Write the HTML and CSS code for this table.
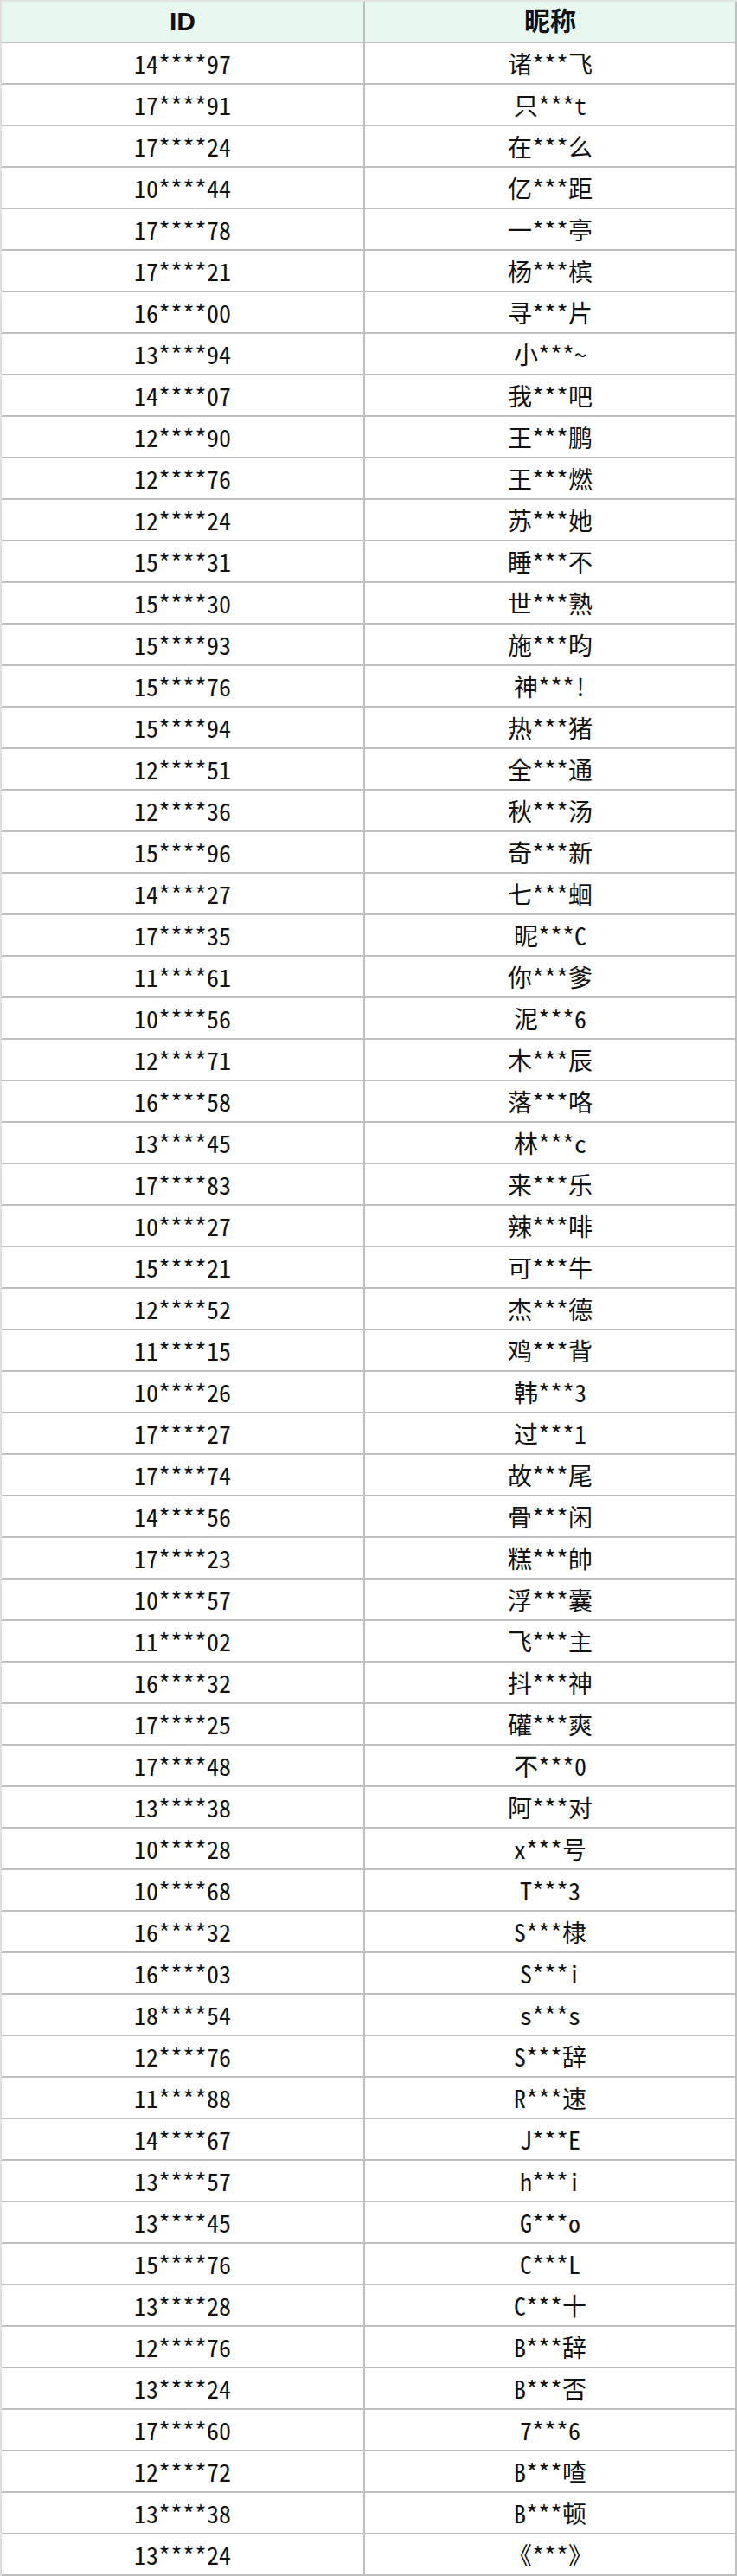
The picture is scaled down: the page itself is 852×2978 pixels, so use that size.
FILE: index.html
```html
<!DOCTYPE html>
<html lang="zh-CN">
<head>
<meta charset="utf-8">
<title>名单</title>
<link rel="stylesheet" href="styles.css">
</head>
<body>
<div class="sheet">
  <div class="cell head">ID</div><div class="cell head">昵称</div>
  <div class="cell">14****97</div><div class="cell">诸***飞</div>
  <div class="cell">17****91</div><div class="cell">只***t</div>
  <div class="cell">17****24</div><div class="cell">在***么</div>
  <div class="cell">10****44</div><div class="cell">亿***距</div>
  <div class="cell">17****78</div><div class="cell">一***亭</div>
  <div class="cell">17****21</div><div class="cell">杨***槟</div>
  <div class="cell">16****00</div><div class="cell">寻***片</div>
  <div class="cell">13****94</div><div class="cell">小***~</div>
  <div class="cell">14****07</div><div class="cell">我***吧</div>
  <div class="cell">12****90</div><div class="cell">王***鹏</div>
  <div class="cell">12****76</div><div class="cell">王***燃</div>
  <div class="cell">12****24</div><div class="cell">苏***她</div>
  <div class="cell">15****31</div><div class="cell">睡***不</div>
  <div class="cell">15****30</div><div class="cell">世***熟</div>
  <div class="cell">15****93</div><div class="cell">施***昀</div>
  <div class="cell">15****76</div><div class="cell">神***!</div>
  <div class="cell">15****94</div><div class="cell">热***猪</div>
  <div class="cell">12****51</div><div class="cell">全***通</div>
  <div class="cell">12****36</div><div class="cell">秋***汤</div>
  <div class="cell">15****96</div><div class="cell">奇***新</div>
  <div class="cell">14****27</div><div class="cell">七***蛔</div>
  <div class="cell">17****35</div><div class="cell">昵***C</div>
  <div class="cell">11****61</div><div class="cell">你***爹</div>
  <div class="cell">10****56</div><div class="cell">泥***6</div>
  <div class="cell">12****71</div><div class="cell">木***辰</div>
  <div class="cell">16****58</div><div class="cell">落***咯</div>
  <div class="cell">13****45</div><div class="cell">林***c</div>
  <div class="cell">17****83</div><div class="cell">来***乐</div>
  <div class="cell">10****27</div><div class="cell">辣***啡</div>
  <div class="cell">15****21</div><div class="cell">可***牛</div>
  <div class="cell">12****52</div><div class="cell">杰***德</div>
  <div class="cell">11****15</div><div class="cell">鸡***背</div>
  <div class="cell">10****26</div><div class="cell">韩***3</div>
  <div class="cell">17****27</div><div class="cell">过***1</div>
  <div class="cell">17****74</div><div class="cell">故***尾</div>
  <div class="cell">14****56</div><div class="cell">骨***闲</div>
  <div class="cell">17****23</div><div class="cell">糕***帥</div>
  <div class="cell">10****57</div><div class="cell">浮***囊</div>
  <div class="cell">11****02</div><div class="cell">飞***主</div>
  <div class="cell">16****32</div><div class="cell">抖***神</div>
  <div class="cell">17****25</div><div class="cell">礶***爽</div>
  <div class="cell">17****48</div><div class="cell">不***0</div>
  <div class="cell">13****38</div><div class="cell">阿***对</div>
  <div class="cell">10****28</div><div class="cell">x***号</div>
  <div class="cell">10****68</div><div class="cell">T***3</div>
  <div class="cell">16****32</div><div class="cell">S***棣</div>
  <div class="cell">16****03</div><div class="cell">S***i</div>
  <div class="cell">18****54</div><div class="cell">s***s</div>
  <div class="cell">12****76</div><div class="cell">S***辞</div>
  <div class="cell">11****88</div><div class="cell">R***速</div>
  <div class="cell">14****67</div><div class="cell">J***E</div>
  <div class="cell">13****57</div><div class="cell">h***i</div>
  <div class="cell">13****45</div><div class="cell">G***o</div>
  <div class="cell">15****76</div><div class="cell">C***L</div>
  <div class="cell">13****28</div><div class="cell">C***十</div>
  <div class="cell">12****76</div><div class="cell">B***辞</div>
  <div class="cell">13****24</div><div class="cell">B***否</div>
  <div class="cell">17****60</div><div class="cell">7***6</div>
  <div class="cell">12****72</div><div class="cell">B***喳</div>
  <div class="cell">13****38</div><div class="cell">B***顿</div>
  <div class="cell">13****24</div><div class="cell">《***》</div>
</div>
</body>
</html>
```

FILE: styles.css
```css
html, body {
  margin: 0;
  padding: 0;
  background: #ffffff;
}

.sheet {
  width: 852px;
  box-sizing: border-box;
  display: grid;
  grid-template-columns: 420px 430px;
  grid-auto-rows: 48px;
  border-top: 2px solid #e2e2e2;
  border-left: 2px solid #dedede;
  font-family: "Noto Sans Mono CJK SC", "Noto Sans CJK SC", "Liberation Sans", sans-serif;
  font-size: 28px;
  color: #111111;
}

.cell {
  box-sizing: border-box;
  display: flex;
  align-items: center;
  justify-content: center;
  border-right: 2px solid #bfbfbf;
  border-bottom: 2px solid #bfbfbf;
  line-height: 1;
  white-space: nowrap;
}

.head {
  background: #e9f8ef;
  font-family: "Liberation Sans", "Noto Sans CJK SC", sans-serif;
  font-size: 30px;
  font-weight: 700;
}
```
